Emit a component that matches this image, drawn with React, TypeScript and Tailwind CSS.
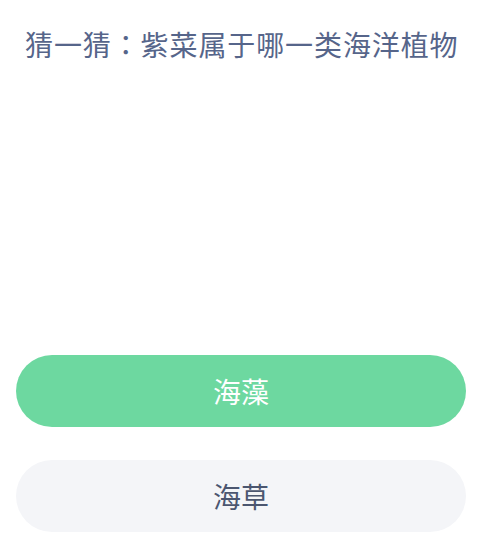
import React from 'react';

const options = [
  { label: '海藻', active: true },
  { label: '海草', active: false },
];

export default function App() {
  return (
    <div
      className="w-[485px] h-[540px] bg-white flex flex-col pl-4 pr-[19px] overflow-hidden"
      style={{ fontFamily: '"Noto Sans CJK SC", "Noto Sans", sans-serif' }}
    >
      {/* Question */}
      <h1 className="pt-[27px] pl-[9px] text-[28px] leading-[34px] tracking-[0.9px] font-normal text-[#56658a] whitespace-nowrap">
        猜一猜<span style={{ fontFamily: '"Noto Sans CJK TC", sans-serif' }}>：</span>紫菜属于哪一类海洋植物
      </h1>

      {/* Options */}
      <div className="mt-[294px] flex flex-col gap-[33px]">
        {options.map((o) => (
          <button
            key={o.label}
            className={
              o.active
                ? 'h-[72px] w-full rounded-full bg-[#6dd8a0] text-white text-[28px] leading-none flex items-center justify-center'
                : 'h-[72px] w-full rounded-full bg-[#f4f5f8] text-[#4b5670] text-[28px] leading-none flex items-center justify-center'
            }
          >
            {o.label}
          </button>
        ))}
      </div>
    </div>
  );
}
